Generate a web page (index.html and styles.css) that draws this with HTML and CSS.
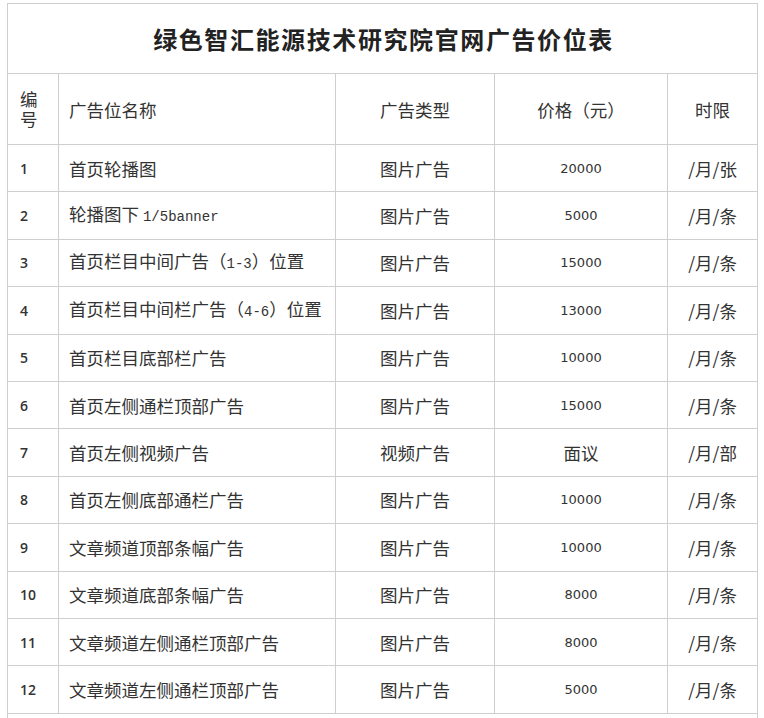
FILE: index.html
```html
<!DOCTYPE html>
<html lang="zh-CN">
<head>
<meta charset="utf-8">
<title>绿色智汇能源技术研究院官网广告价位表</title>
<link rel="stylesheet" href="styles.css">
</head>
<body>
<table class="price-table">
  <colgroup>
    <col class="c-no">
    <col class="c-name">
    <col class="c-type">
    <col class="c-price">
    <col class="c-term">
  </colgroup>
  <tr class="title-row"><td colspan="5" class="title">绿色智汇能源技术研究院官网广告价位表</td></tr>
  <tr class="head-row">
    <td class="no-head">编号</td>
    <td class="name">广告位名称</td>
    <td class="center">广告类型</td>
    <td class="center">价格（元）</td>
    <td class="center">时限</td>
  </tr>
  <tr><td class="no">1</td><td class="name">首页轮播图</td><td class="center">图片广告</td><td class="price">20000</td><td class="center">/月/张</td></tr>
  <tr><td class="no">2</td><td class="name">轮播图下 <span class="mono">1/5banner</span></td><td class="center">图片广告</td><td class="price">5000</td><td class="center">/月/条</td></tr>
  <tr><td class="no">3</td><td class="name">首页栏目中间广告（<span class="mono-s">1-3</span>）位置</td><td class="center">图片广告</td><td class="price">15000</td><td class="center">/月/条</td></tr>
  <tr><td class="no">4</td><td class="name">首页栏目中间栏广告（<span class="mono-s">4-6</span>）位置</td><td class="center">图片广告</td><td class="price">13000</td><td class="center">/月/条</td></tr>
  <tr><td class="no">5</td><td class="name">首页栏目底部栏广告</td><td class="center">图片广告</td><td class="price">10000</td><td class="center">/月/条</td></tr>
  <tr><td class="no">6</td><td class="name">首页左侧通栏顶部广告</td><td class="center">图片广告</td><td class="price">15000</td><td class="center">/月/条</td></tr>
  <tr><td class="no">7</td><td class="name">首页左侧视频广告</td><td class="center">视频广告</td><td class="center">面议</td><td class="center">/月/部</td></tr>
  <tr><td class="no">8</td><td class="name">首页左侧底部通栏广告</td><td class="center">图片广告</td><td class="price">10000</td><td class="center">/月/条</td></tr>
  <tr><td class="no">9</td><td class="name">文章频道顶部条幅广告</td><td class="center">图片广告</td><td class="price">10000</td><td class="center">/月/条</td></tr>
  <tr><td class="no">10</td><td class="name">文章频道底部条幅广告</td><td class="center">图片广告</td><td class="price">8000</td><td class="center">/月/条</td></tr>
  <tr><td class="no">11</td><td class="name">文章频道左侧通栏顶部广告</td><td class="center">图片广告</td><td class="price">8000</td><td class="center">/月/条</td></tr>
  <tr><td class="no">12</td><td class="name">文章频道左侧通栏顶部广告</td><td class="center">图片广告</td><td class="price">5000</td><td class="center">/月/条</td></tr>
  <tr class="note-row"><td colspan="5"></td></tr>
</table>
</body>
</html>
```
FILE: styles.css
```css
html, body {
  margin: 0;
  padding: 0;
  background: #ffffff;
}
body {
  padding: 3px 0 0 7px;
  font-family: "Noto Sans CJK SC", "Noto Sans", sans-serif;
  color: #333333;
  font-size: 17.5px;
}
.price-table {
  border-collapse: collapse;
  table-layout: fixed;
  width: 751px;
}
.c-no { width: 51px; }
.c-name { width: 277px; }
.c-type { width: 159px; }
.c-price { width: 173px; }
.c-term { width: 90px; }
.price-table td {
  border: 1px solid #cfcfcf;
  height: 46.4px;
  padding: 0;
  vertical-align: middle;
  line-height: 21px;
}
.title-row td {
  height: 69px;
}
.head-row td {
  height: 70px;
}
.title {
  text-align: center;
  font-size: 24px;
  font-weight: 700;
  letter-spacing: 1.6px;
  color: #222222;
  padding-left: 2px !important;
}
.no-head {
  padding: 0 14px 0 12px !important;
  line-height: 20px !important;
}
.no {
  padding-left: 12px !important;
  font-family: "Open Sans", "Noto Sans", sans-serif;
  font-weight: 600;
  font-size: 14px;
}
.name {
  padding-left: 10px !important;
}
.center {
  text-align: center;
}
.price {
  text-align: center;
  font-family: "DejaVu Sans", sans-serif;
  font-size: 13px;
}
.mono {
  font-family: "Liberation Mono", monospace;
  font-size: 14px;
}
.mono-s {
  font-family: "Liberation Mono", monospace;
  font-size: 14px;
}
.note-row td {
  height: 40px;
}
```
